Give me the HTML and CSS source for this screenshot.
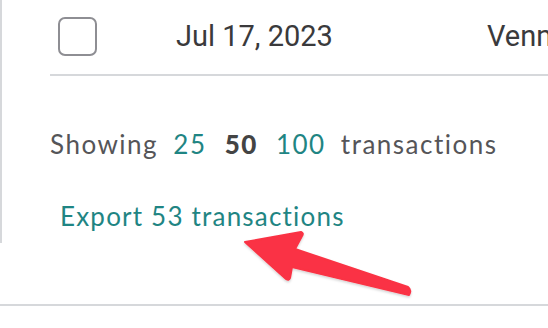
FILE: index.html
```html
<!DOCTYPE html>
<html lang="en">
<head>
  <meta charset="UTF-8">
  <meta name="viewport" content="width=device-width, initial-scale=1.0">
  <title>Transactions</title>
  <link rel="stylesheet" href="styles.css">
</head>
<body>
  <div class="panel">
    <div class="row">
      <span class="check"></span>
      <span class="date">Jul 17, 2023</span>
      <span class="vendor">Venmo</span>
    </div>
    <p class="showing">
      Showing <a href="#" class="num">25</a> <b class="num current">50</b> <a href="#" class="num">100</a> transactions
    </p>
    <a href="#" class="export">Export 53 transactions</a>
  </div>
  <div class="rule"></div>

  <svg class="arrow" width="548" height="328" viewBox="0 0 548 328">
    <defs>
      <filter id="shade" x="-10%" y="-10%" width="120%" height="130%">
        <feDropShadow dx="0" dy="1.5" stdDeviation="1.2" flood-color="#000" flood-opacity="0.18"/>
      </filter>
    </defs>
    <path d="M245 242 L301 232 Q304 233 302 236 L295 249 L408 287 Q412 290 409 295 L292 267 L290 278 Q289 281 286 279 Z"
          fill="#fa3344" stroke="#fa3344" stroke-width="2" stroke-linejoin="round" filter="url(#shade)"/>
  </svg>
</body>
</html>
```

FILE: styles.css
```css
*{
  margin: 0;
  padding: 0;
  box-sizing: border-box;
}
body{
  width: 548px;
  height: 328px;
  overflow: hidden;
  background: #fff;
  position: relative;
}
a{
  text-decoration: none;
}
.panel{
  height: 243px;
  border-left: 2px solid #d6d8db;
  padding-left: 48px;
  overflow: hidden;
}
.row{
  display: flex;
  align-items: center;
  height: 76px;
  border-bottom: 2px solid #d6d8db;
  font-family: Roboto, "Liberation Sans", sans-serif;
  font-size: 29px;
  color: #3a3a3c;
  white-space: nowrap;
  padding-bottom: 2px;
}
.check{
  width: 39px;
  height: 39px;
  margin-left: 8px;
  border: 2px solid #8e8e93;
  border-radius: 7px;
  flex: none;
}
.date{
  margin-left: 79px;
  width: 311px;
  flex: none;
}
.showing{
  margin-top: 52px;
  font-family: Lato, "Open Sans", sans-serif;
  font-size: 26px;
  letter-spacing: 1.5px;
  color: #555558;
  white-space: nowrap;
  word-spacing: 4px;
}
.num{
  color: #1f8583;
  padding: 0 3px;
}
.current{
  color: #444;
  font-weight: 900;
}
.export{
  display: inline-block;
  margin-top: 40px;
  margin-left: 10px;
  font-family: Lato, "Open Sans", sans-serif;
  font-size: 26px;
  letter-spacing: 1.2px;
  color: #1f8583;
}
.rule{
  margin-top: 61px;
  height: 2px;
  background: #d6d8db;
}
.arrow{
  position: absolute;
  left: 0;
  top: 0;
}
```
